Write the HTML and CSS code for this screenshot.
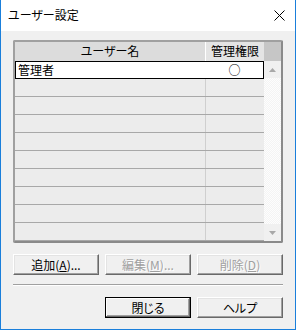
FILE: index.html
```html
<!DOCTYPE html>
<html lang="ja">
<head>
<meta charset="utf-8">
<link rel="stylesheet" href="styles.css">
</head>
<body>
<div class="window">
  <div class="titlebar">
    <span class="title">ユーザー設定</span>
    <svg class="close" width="11" height="11" viewBox="0 0 11 11"><path d="M0.5 0.5L10.5 10.5M10.5 0.5L0.5 10.5" stroke="#000" stroke-width="1" fill="none"/></svg>
  </div>
  <div class="client">
    <div class="listbox">
      <div class="table">
        <div class="hdr">
          <div class="hcell c1">ユーザー名</div>
          <div class="hcell c2">管理権限</div>
        </div>
        <div class="row sel"><div class="cell c1">管理者</div><div class="cell c2 center">○</div></div>
        <div class="row"><div class="cell c1"></div><div class="cell c2"></div></div>
        <div class="row"><div class="cell c1"></div><div class="cell c2"></div></div>
        <div class="row"><div class="cell c1"></div><div class="cell c2"></div></div>
        <div class="row"><div class="cell c1"></div><div class="cell c2"></div></div>
        <div class="row"><div class="cell c1"></div><div class="cell c2"></div></div>
        <div class="row"><div class="cell c1"></div><div class="cell c2"></div></div>
        <div class="row"><div class="cell c1"></div><div class="cell c2"></div></div>
        <div class="row"><div class="cell c1"></div><div class="cell c2"></div></div>
        <div class="row"><div class="cell c1"></div><div class="cell c2"></div></div>
      </div>
      <div class="vscroll">
        <div class="hfill"></div>
        <div class="arrow"><svg width="7" height="4" viewBox="0 0 7 4"><path d="M3.5 0L7 4H0Z" fill="#a8a8a8"/></svg></div>
        <div class="track"></div>
        <div class="arrow"><svg width="7" height="4" viewBox="0 0 7 4"><path d="M0 0H7L3.5 4Z" fill="#a8a8a8"/></svg></div>
      </div>
    </div>
    <div class="btnrow">
      <button class="btn">追加(<u>A</u>)...</button>
      <button class="btn dis">編集(<u>M</u>)...</button>
      <button class="btn dis">削除(<u>D</u>)</button>
    </div>
    <div class="sep"></div>
    <div class="btnrow right">
      <button class="btn def">閉じる</button>
      <button class="btn">ヘルプ</button>
    </div>
  </div>
</div>
</body>
</html>
```
FILE: styles.css
```css
html, body {
  margin: 0;
  padding: 0;
  background: #f0f0f0;
}
body {
  font-family: "Noto Sans CJK JP", "Noto Sans", sans-serif;
  font-size: 12px;
  color: #000;
}
.window {
  width: 296px;
  height: 330px;
  box-sizing: border-box;
  border: 1px solid #1a7fdb;
  border-top: none;
  display: flex;
  flex-direction: column;
  background: #f0f0f0;
}
.titlebar {
  height: 31px;
  background: #fff;
  display: flex;
  align-items: center;
  justify-content: space-between;
  padding: 0 10px 0 7px;
  flex: none;
}
.title {
  font-size: 12px;
  font-feature-settings: "palt";
  line-height: 14px;
  margin-top: -1px;
}
.close {
  display: block;
  margin-top: -1px;
}
.client {
  flex: 1;
  padding: 9px 12px 0 12px;
  display: flex;
  flex-direction: column;
}
.listbox {
  height: 203px;
  box-sizing: border-box;
  border: 2px solid #a0a0a0;
  border-right-color: #8a8a8a;
  border-bottom-color: #8a8a8a;
  border-radius: 2px;
  display: flex;
  background: #ececec;
}
.table {
  width: 249px;
  display: flex;
  flex-direction: column;
}
.hdr {
  height: 19px;
  box-sizing: border-box;
  display: flex;
  background: #dcdcdc;
}
.hcell {
  box-sizing: border-box;
  line-height: 18px;
  text-align: center;
  font-feature-settings: "palt";
}
.hdr .c1 {
  border-right: 1px solid #fff;
}
.hdr .c2 {
  background: #e4e4e4;
}
.c1 {
  width: 191px;
  flex: none;
}
.c2 {
  width: 58px;
  flex: none;
}
.row {
  height: 18px;
  box-sizing: border-box;
  display: flex;
  border-bottom: 1px solid #a8a8a8;
}
.cell {
  box-sizing: border-box;
  line-height: 16px;
  padding-left: 3px;
}
.row .c1 {
  border-right: 1px solid #cfcfcf;
}
.row.sel {
  background: #fff;
  border: 1px solid #000;
}
.row.sel .c1 {
  width: 190px;
  padding-left: 2px;
  border-right: none;
}
.row.sel .c2 {
  width: 57px;
}
.center {
  text-align: center;
  padding-left: 0;
}
.vscroll {
  width: 17px;
  display: flex;
  flex-direction: column;
}
.hfill {
  height: 19px;
  background: #c6c6c6;
}
.arrow {
  height: 17px;
  background: #f0f0f0;
  display: flex;
  align-items: center;
  justify-content: center;
}
.track {
  flex: 1;
  background: repeating-conic-gradient(#f4f4f4 0 25%, #fdfdfd 0 50%) 0 0 / 2px 2px;
}
.btnrow {
  display: flex;
  gap: 6px;
  margin-top: 11px;
}
.btnrow.right {
  justify-content: flex-end;
  margin-top: 11px;
}
.btn {
  width: 86px;
  height: 21px;
  box-sizing: border-box;
  margin: 0;
  padding: 0;
  font-family: inherit;
  font-size: 12px;
  line-height: 18px;
  color: #000;
  background: #f0f0f0;
  border: 1px solid;
  border-color: #fff #696969 #696969 #fff;
  box-shadow: inset -1px -1px #a0a0a0, inset 1px 1px #e3e3e3;
  font-feature-settings: "palt";
}
.btn u {
  text-underline-offset: 1px;
}
.btn.dis {
  color: #a0a0a0;
  text-shadow: 1px 1px #fff;
}
.btn.def {
  border: 1px solid #000;
  box-shadow: inset -1px -1px #696969, inset 1px 1px #fff, inset -2px -2px #a0a0a0;
}
.sep {
  margin-top: 9px;
  height: 0;
  border-top: 1px solid #a0a0a0;
  border-bottom: 1px solid #fff;
}
```
